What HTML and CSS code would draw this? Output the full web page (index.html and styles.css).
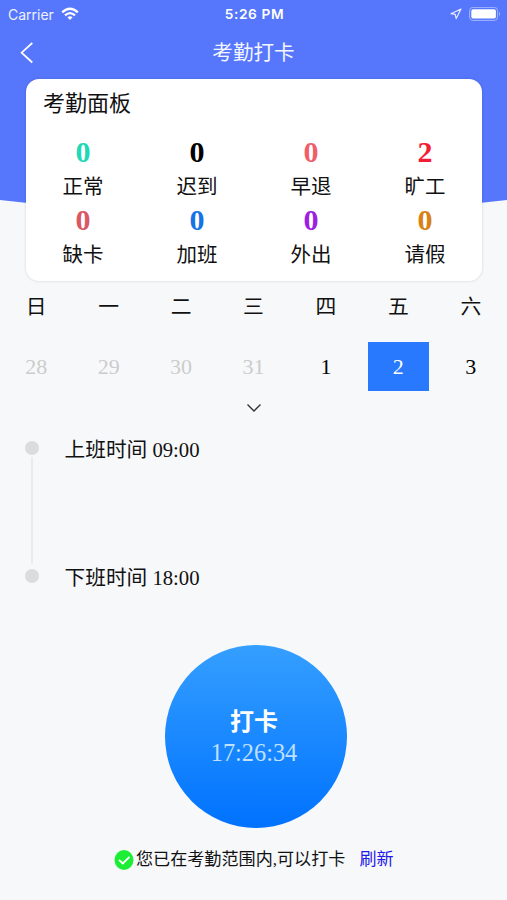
FILE: index.html
```html
<!DOCTYPE html>
<html lang="zh-CN">
<head>
<meta charset="utf-8">
<meta name="viewport" content="width=device-width, initial-scale=1">
<title>考勤打卡</title>
<link rel="stylesheet" href="styles.css">
</head>
<body>
<div class="screen">
  <svg class="backdrop" viewBox="0 0 507 208" preserveAspectRatio="none" aria-hidden="true"><path d="M0 0H507V200Q253.500 230 0 200Z" fill="#5677fc"/></svg>
  <header class="status">
    <div class="status-left">
      <span>Carrier</span>
      <svg width="18" height="14" viewBox="0 0 18 14" fill="none" stroke="#fff" stroke-width="2.300"><path d="M1.200 5.300Q9-1.800 16.800 5.300M4 8.400Q9 3.900 14 8.400"/><path d="M6.400 10.200Q9 8.100 11.600 10.200L9 12.900Z" fill="#fff" stroke="none"/></svg>
    </div>
    <span class="clock">5:26 PM</span>
    <div class="status-right">
      <svg width="12" height="12" viewBox="0 0 12 12" fill="none" stroke="#e8ecff" stroke-width="1.200" stroke-linejoin="round"><path d="M11 1L1 5.700L5.200 6.400L6.200 10.600Z"/></svg>
      <svg width="32" height="15" viewBox="0 0 32 15"><rect x=".6" y=".4" width="28" height="13" rx="3.300" fill="none" stroke="#a2b4ff" stroke-width="1"/><rect x="2.300" y="2.200" width="24.600" height="9.400" rx="1.800" fill="#fff"/><path d="M30 4.800Q32.200 6.900 30 9Z" fill="#a2b4ff"/></svg>
    </div>
  </header>
  <nav class="navbar">
    <svg width="14" height="22" viewBox="0 0 14 22" fill="none" stroke="#fff" stroke-width="1.700"><path d="M12.300 1L1.600 10.700L12.300 20.500"/></svg>
    <h1>考勤打卡</h1>
  </nav>
  <section class="panel">
    <h2>考勤面板</h2>
    <div class="stats">
      <div class="stat"><b class="teal">0</b><span>正常</span></div>
      <div class="stat"><b class="black">0</b><span>迟到</span></div>
      <div class="stat"><b class="coral">0</b><span>早退</span></div>
      <div class="stat"><b class="red">2</b><span>旷工</span></div>
      <div class="stat"><b class="rose">0</b><span>缺卡</span></div>
      <div class="stat"><b class="blue">0</b><span>加班</span></div>
      <div class="stat"><b class="purple">0</b><span>外出</span></div>
      <div class="stat"><b class="orange">0</b><span>请假</span></div>
    </div>
  </section>
  <section class="calendar">
    <div class="week names"><span>日</span><span>一</span><span>二</span><span>三</span><span>四</span><span>五</span><span>六</span></div>
    <div class="week days"><span class="past">28</span><span class="past">29</span><span class="past">30</span><span class="past">31</span><span>1</span><span class="today">2</span><span>3</span></div>
    <svg class="expand" width="16" height="10" viewBox="0 0 16 10" fill="none" stroke="#333" stroke-width="1.400"><path d="M1.500 1.500L8 8L14.500 1.500"/></svg>
  </section>
  <section class="timeline">
    <div class="track"><i class="dot"></i><i class="line"></i><i class="dot"></i></div>
    <div class="shifts"><p>上班时间 09:00</p><p>下班时间 18:00</p></div>
  </section>
  <button class="punch"><strong>打卡</strong><span>17:26:34</span></button>
  <footer class="range">
    <svg width="20" height="22" viewBox="0 0 20 22"><ellipse cx="10" cy="11" rx="9.500" ry="10" fill="#1bee35"/><path d="M5 10.800L8.800 14.500L15.500 7.800" fill="none" stroke="#fff" stroke-width="1.800"/></svg>
    <span>您已在考勤范围内,可以打卡</span>
    <a>刷新</a>
  </footer>
</div>
</body>
</html>
```
FILE: styles.css
```css
* { box-sizing: border-box; }
body { margin: 0; background: #f7f8fa; color: #111; font-family: "Liberation Serif", "Noto Sans CJK SC", serif; }
h1, h2, p { margin: 0; font-weight: 400; }
svg { display: block; flex: none; }
.screen { position: relative; height: 900px; display: flex; flex-direction: column; overflow: hidden; }
.screen > * { position: relative; flex: none; }
.screen > .backdrop { position: absolute; left: 0; top: 0; width: 100%; height: 208px; }
.status { height: 27px; padding: 0 6px 0 8px; display: grid; grid-template-columns: 1fr auto 1fr; align-items: center; color: #fff; font: 14px/27px Inter, "Liberation Sans", sans-serif; }
.status-left { display: flex; align-items: center; gap: 7px; color: #eef1ff; }
.status-right { display: flex; align-items: center; justify-content: flex-end; gap: 7px; }
.clock { padding-top: 1px; font-weight: 600; font-size: 13.7px; letter-spacing: .6px; }
.navbar { height: 52px; padding: 0 20px; display: grid; grid-template-columns: 14px 1fr 14px; align-items: center; }
.navbar h1 { color: #f4f6ff; text-align: center; font-size: 20.6px; line-height: 53px; height: 52px; }
.panel { height: 202px; margin: 0 25px 0 26px; background: #fff; border-radius: 13px; box-shadow: 0 0 3px rgba(0, 0, 0, .16); }
.panel h2 { padding-left: 17px; font-size: 22px; line-height: 49px; height: 55px; }
.stats { display: grid; grid-template-columns: repeat(4, 1fr); grid-auto-rows: 68.3px; }
.stat { display: flex; flex-direction: column; align-items: center; }
.stat b { font-size: 30px; line-height: 36px; }
.stat span { font-size: 20.5px; line-height: 34px; }
.teal { color: #20d8b5; }
.black { color: #000; }
.coral { color: #ee5f6b; }
.red { color: #f51d36; }
.rose { color: #d95864; }
.blue { color: #1673e6; }
.purple { color: #9d20e0; }
.orange { color: #d98212; }
.calendar { height: 144px; display: flex; flex-direction: column; align-items: center; }
.week { width: 100%; display: grid; grid-template-columns: repeat(7, 1fr); justify-items: center; }
.names { height: 61px; font-size: 20.8px; line-height: 52px; }
.days { height: 49px; font-size: 22px; line-height: 49px; color: #000; }
.days .past { color: #ccc; }
.days .today { width: 61px; text-align: center; color: #fff; background: #2979ff; }
.expand { margin-top: 12px; }
.timeline { height: 220px; padding: 16px 0 0 25px; display: flex; gap: 25.5px; }
.track { width: 14px; height: 142px; display: flex; flex-direction: column; align-items: center; }
.dot { width: 14px; height: 14px; border-radius: 50%; background: #dcdcdc; }
.line { width: 2px; flex: 1; margin: 2px 0 5px; background: #ebebeb; }
.shifts p { font-size: 20.7px; line-height: 18px; height: 128px; white-space: nowrap; }
.punch { width: 182px; height: 183px; margin: 0 0 0 165px; padding: 1px 4px 0 0; border: 0; border-radius: 50%; background: linear-gradient(#359fff, #0072ff); color: #fff; font-family: inherit; display: flex; flex-direction: column; align-items: center; justify-content: center; }
.punch strong { font-size: 24px; line-height: 32px; }
.punch span { font-size: 24.3px; line-height: 30px; color: #bfe0ff; }
.range { margin-top: 20px; padding-left: 114px; display: flex; align-items: center; font-size: 17.1px; line-height: 24px; white-space: nowrap; }
.range svg { margin-top: -1px; }
.range span { margin-left: 2px; }
.range a { margin-left: 14px; color: #2418e8; }
```
